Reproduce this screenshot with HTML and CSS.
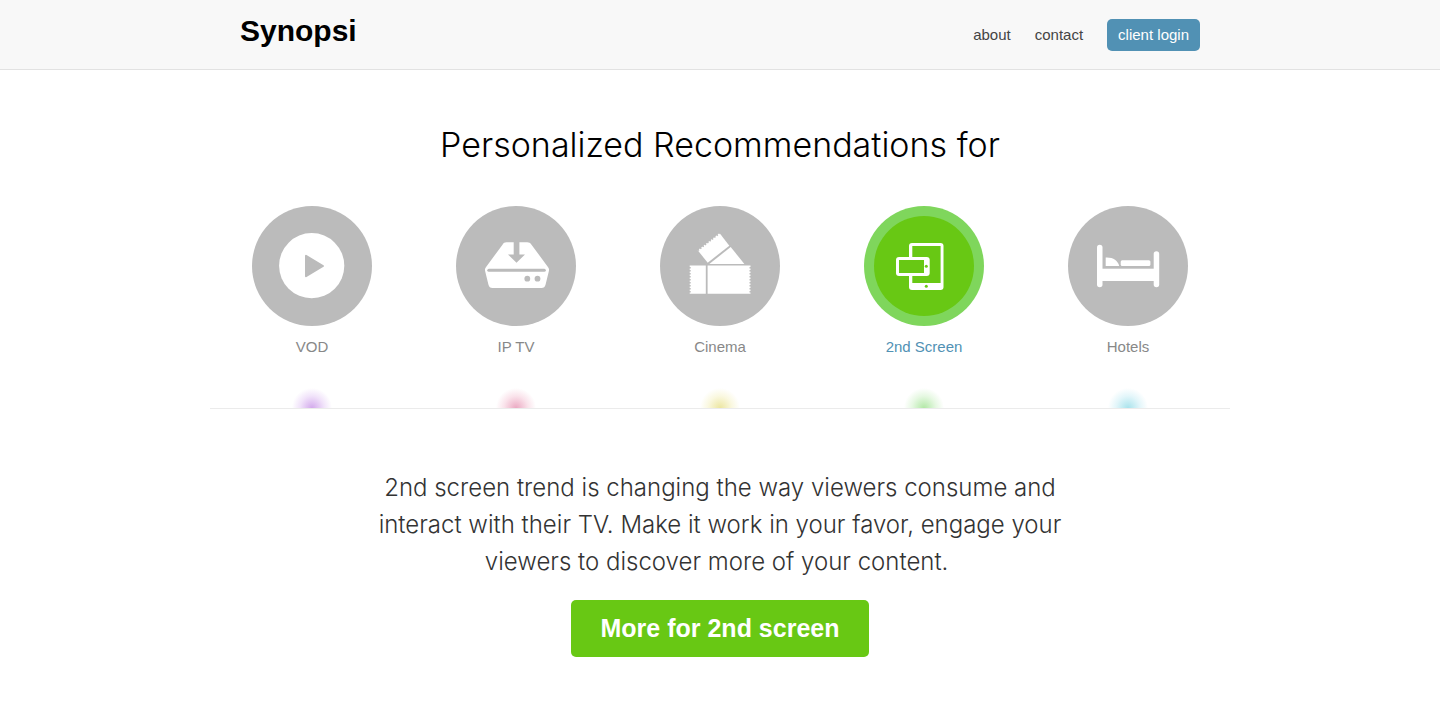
FILE: index.html
```
<!DOCTYPE html>
<html lang="en">
<head>
    <meta charset="UTF-8">
    <meta name="viewport" content="width=device-width, initial-scale=1.0">
    <title>Synopsi</title>
    <link rel="stylesheet" href="styles.css">
</head>
<body>
    <header class="header">
        <div class="header-inner">
            <a class="logo" href="#">Synopsi</a>
            <nav class="nav">
                <a href="#about">about</a>
                <a href="#contact">contact</a>
                <a class="login" href="#login">client login</a>
            </nav>
        </div>
    </header>

    <main class="main">
        <h1 class="title">Personalized Recommendations for</h1>

        <ul class="segments">
            <li class="segment vod">
                <a href="#vod">
                    <svg class="icon" viewBox="0 0 120 120" aria-hidden="true">
                        <circle class="disc" cx="60" cy="60" r="60"/>
                        <circle cx="59.7" cy="59.7" r="32.6"/>
                        <path class="cut round" d="M54 49.8v20.4L71 60z"/>
                    </svg>
                    <span>VOD</span>
                </a>
            </li>
            <li class="segment iptv">
                <a href="#iptv">
                    <svg class="icon" viewBox="0 0 120 120" aria-hidden="true">
                        <circle class="disc" cx="60" cy="60" r="60"/>
                        <path d="M50.5 36.3h20.6c2 0 3.2.7 4.4 2.400l16.6 22.500c.9 1.200 1.100 2.300.8 3.800l-3.300 13.500c-.6 2.500-1.800 3.500-4.200 3.500H36.600c-2.400 0-3.600-1-4.200-3.500L29.100 65c-.3-1.500-.1-2.600.8-3.800l16.600-22.500c1.200-1.700 2-2.400 4-2.400z"/>
                        <path class="cut" d="M57.7 36h5.700v12.500h5.600l-8.500 8.200-8.500-8.200h5.700z"/>
                        <rect class="cut" x="31.3" y="62.8" width="58.5" height="3" rx="1.5"/>
                        <circle class="cut" cx="71.3" cy="72.7" r="2.9"/>
                        <circle class="cut" cx="81.5" cy="72.7" r="2.9"/>
                    </svg>
                    <span>IP TV</span>
                </a>
            </li>
            <li class="segment cinema">
                <a href="#cinema">
                    <svg class="icon" viewBox="0 0 120 120" aria-hidden="true">
                        <circle class="disc" cx="60" cy="60" r="60"/>
                        <path d="M59.5 27l9.800 12.700-21.600 17L37.700 44.300z"/>
                        <path d="M70.700 41l13.700 17H49.300z"/>
                        <path d="M29.7 59.5h60.800v28.300H29.700z"/>
                        <path class="cut-line" d="M46.700 59v29.500"/>
                        <path class="teeth" d="M29.7 61v26M90.500 61v26"/>
                        <path class="teeth" d="M37.700 44.300L59.500 27"/>
                    </svg>
                    <span>Cinema</span>
                </a>
            </li>
            <li class="segment second active">
                <a href="#second-screen" aria-current="true">
                    <svg class="icon" viewBox="0 0 120 120" aria-hidden="true">
                        <circle class="halo" cx="60" cy="60" r="60"/>
                        <circle class="disc" cx="60" cy="60" r="50"/>
                        <rect x="45" y="37" width="34.5" height="47" rx="3"/>
                        <rect class="cut" x="48.3" y="40" width="28.3" height="37"/>
                        <rect x="32" y="51" width="33.7" height="19" rx="3"/>
                        <rect class="cut" x="35" y="54" width="25" height="13"/>
                        <circle class="cut" cx="62.3" cy="60.3" r="1.5"/>
                        <circle class="cut" cx="62.3" cy="80.3" r="1.5"/>
                    </svg>
                    <span>2nd Screen</span>
                </a>
            </li>
            <li class="segment hotels">
                <a href="#hotels">
                    <svg class="icon" viewBox="0 0 120 120" aria-hidden="true">
                        <circle class="disc" cx="60" cy="60" r="60"/>
                        <rect x="29" y="38.7" width="5.5" height="42.6" rx="2.75"/>
                        <rect x="85.7" y="45.3" width="5.5" height="36" rx="2.75"/>
                        <rect x="31" y="62.7" width="57" height="12.3"/>
                        <path d="M37.7 51.500c7.300-.4 12 2.800 13.500 8.500H37.700z"/>
                        <rect x="52.7" y="54.3" width="29.7" height="5.7" rx="1.5"/>
                    </svg>
                    <span>Hotels</span>
                </a>
            </li>
        </ul>

        <section class="pitch">
            <p>2nd screen trend is changing the way viewers consume and interact with their TV. Make it work in your favor, engage your viewers to discover more of your content.&nbsp;</p>
            <a class="button" href="#more">More for 2nd screen</a>
        </section>
    </main>
</body>
</html>
```
FILE: styles.css
```
* {
    margin: 0;
    padding: 0;
    box-sizing: border-box;
}

body {
    font-family: "Helvetica Neue", "Liberation Sans", Arial, sans-serif;
    font-size: 15px;
    line-height: 20px;
    color: #333;
    background: #fff;
}

a {
    text-decoration: none;
}

.header {
    background: #f8f8f8;
    border-bottom: 1px solid #e2e2e2;
}

.header-inner {
    display: flex;
    justify-content: space-between;
    align-items: flex-start;
    max-width: 960px;
    margin: 0 auto;
    padding-bottom: 18px;
}

.logo {
    color: #000;
    font-size: 30px;
    font-weight: bold;
    line-height: 36px;
    padding-top: 13px;
}

.nav {
    display: flex;
    align-items: center;
    gap: 24px;
    padding-top: 19px;
}

.nav a {
    color: #444;
}

.nav .login {
    color: #fff;
    background: #5191b4;
    padding: 6px 11px;
    border-radius: 5px;
}

.main {
    max-width: 1020px;
    margin: 0 auto;
}

.title {
    color: #000;
    font-family: Inter, "Helvetica Neue", sans-serif;
    font-size: 34px;
    font-weight: 300;
    line-height: 44px;
    text-align: center;
    padding: 53px 0 39px;
}

.segments {
    display: flex;
    list-style: none;
    border-bottom: 1px solid #ebebeb;
}

.segment {
    flex: 1;
    text-align: center;
    padding-bottom: 51px;
    background: radial-gradient(circle at 50% 100%, var(--glow), var(--glow-soft) 12px, transparent 20px);
}

.vod { --glow: #d3a9ec; --glow-soft: #f1e3fa; }
.iptv { --glow: #eba9c2; --glow-soft: #fae3eb; }
.cinema { --glow: #ece6a0; --glow-soft: #faf8e0; }
.second { --glow: #b2e8a6; --glow-soft: #e6f8e2; }
.hotels { --glow: #a9e3ec; --glow-soft: #e3f6fa; }

.segment a {
    display: inline-flex;
    flex-direction: column;
    align-items: center;
    gap: 11px;
    color: #888;
}

.icon {
    width: 120px;
    height: 120px;
    fill: #fff;
}

.disc,
.cut {
    fill: #bbb;
}

.round {
    stroke: #bbb;
    stroke-width: 2;
    stroke-linejoin: round;
}

.cut-line {
    stroke: #bbb;
    stroke-width: 1.8;
}

/* perforated ticket edges */
.teeth {
    stroke: #bbb;
    stroke-width: 2;
    stroke-dasharray: 1.5 1.5;
}

.active a {
    color: #5191b4;
}

.active .halo {
    fill: #7fd65c;
}

.active .disc,
.active .cut {
    fill: #68c814;
}

.pitch {
    max-width: 700px;
    margin: 0 auto;
    padding: 60px 0;
    text-align: center;
}

.pitch p {
    font-family: Inter, "Helvetica Neue", sans-serif;
    font-size: 24px;
    font-weight: 300;
    line-height: 37px;
    margin-bottom: 20px;
}

.button {
    display: inline-block;
    color: #fff;
    background: #68c814;
    font-size: 25px;
    font-weight: bold;
    line-height: 29px;
    padding: 14px 30px;
    border-radius: 5px;
}
```
